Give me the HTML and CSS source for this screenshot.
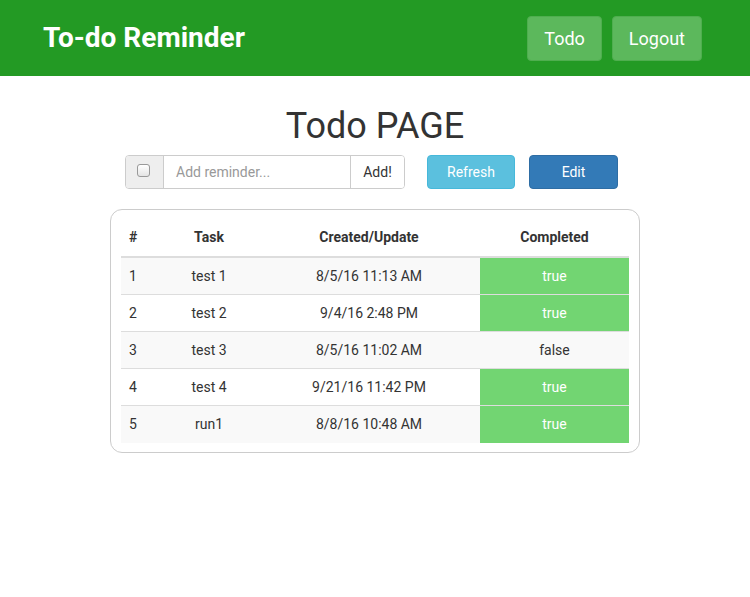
FILE: index.html
```html
<!DOCTYPE html>
<html>
<head>
<meta charset="utf-8">
<link rel="stylesheet" href="styles.css">
</head>
<body>
<header class="navbar">
  <div class="brand">To-do Reminder</div>
  <nav class="nav">
    <a class="nav-btn">Todo</a>
    <a class="nav-btn">Logout</a>
  </nav>
</header>
<main class="main">
  <h1 class="title">Todo PAGE</h1>
  <div class="toolbar">
    <div class="input-group">
      <span class="addon"><span class="checkbox"></span></span>
      <span class="input">Add reminder...</span>
      <span class="add-btn">Add!</span>
    </div>
    <span class="btn btn-info">Refresh</span>
    <span class="btn btn-primary">Edit</span>
  </div>
  <div class="card">
    <table class="table">
      <thead>
        <tr><th class="c1">#</th><th class="c2">Task</th><th class="c3">Created/Update</th><th class="c4">Completed</th></tr>
      </thead>
      <tbody>
        <tr><td class="c1">1</td><td class="c2">test 1</td><td class="c3">8/5/16 11:13 AM</td><td class="c4 done">true</td></tr>
        <tr><td class="c1">2</td><td class="c2">test 2</td><td class="c3">9/4/16 2:48 PM</td><td class="c4 done">true</td></tr>
        <tr><td class="c1">3</td><td class="c2">test 3</td><td class="c3">8/5/16 11:02 AM</td><td class="c4">false</td></tr>
        <tr><td class="c1">4</td><td class="c2">test 4</td><td class="c3">9/21/16 11:42 PM</td><td class="c4 done">true</td></tr>
        <tr><td class="c1">5</td><td class="c2">run1</td><td class="c3">8/8/16 10:48 AM</td><td class="c4 done">true</td></tr>
      </tbody>
    </table>
  </div>
</main>
</body>
</html>
```

FILE: styles.css
```css
* { box-sizing: border-box; }
body {
  margin: 0;
  font-family: Roboto, "Liberation Sans", sans-serif;
  color: #333;
  background: #fff;
}
.navbar {
  height: 76px;
  background: #239a24;
  display: flex;
  align-items: center;
  justify-content: space-between;
  padding: 0 48px 0 43px;
}
.brand {
  color: #fff;
  font-size: 28px;
  font-weight: 700;
  margin-top: -2px;
}
.nav {
  display: flex;
  gap: 10px;
  margin-top: 1px;
}
.nav-btn {
  display: flex;
  align-items: center;
  justify-content: center;
  height: 45px;
  padding: 0 16px;
  background: #5cb85c;
  color: #fff;
  font-size: 18px;
  border-radius: 4px;
  border: 1px solid #4fae4f;
}
.main {
  display: flex;
  flex-direction: column;
  align-items: center;
}
.title {
  margin: 28px 0 0;
  font-size: 36px;
  font-weight: 400;
  line-height: 44px;
  color: #333;
}
.toolbar {
  display: flex;
  align-items: center;
  margin-top: 7px;
  margin-right: 7px;
}
.input-group {
  display: flex;
  height: 34px;
  border: 1px solid #ccc;
  border-radius: 4px;
  font-size: 14px;
  overflow: hidden;
}
.addon {
  width: 38px;
  background: #eee;
  border-right: 1px solid #ccc;
  display: flex;
  align-items: center;
  justify-content: center;
}
.checkbox {
  width: 13px;
  height: 13px;
  border: 1px solid #999;
  border-radius: 3px;
  background: linear-gradient(#fff, #e4e4e4);
  margin-top: -4px;
  margin-left: -3px;
}
.input {
  width: 186px;
  display: flex;
  align-items: center;
  padding-left: 12px;
  color: #999;
  background: #fff;
}
.add-btn {
  width: 54px;
  border-left: 1px solid #ccc;
  display: flex;
  align-items: center;
  justify-content: center;
  color: #333;
  background: #fff;
}
.btn {
  height: 34px;
  display: flex;
  align-items: center;
  justify-content: center;
  color: #fff;
  font-size: 14px;
  border-radius: 4px;
}
.btn-info {
  width: 88px;
  margin-left: 22px;
  background: #5bc0de;
  border: 1px solid #46b8da;
}
.btn-primary {
  width: 89px;
  margin-left: 14px;
  background: #337ab7;
  border: 1px solid #2e6da4;
}
.card {
  margin-top: 20px;
  width: 530px;
  border: 1px solid #ccc;
  border-radius: 12px;
  padding: 10px 10px 9px;
}
.table {
  width: 508px;
  border-collapse: collapse;
  font-size: 14px;
}
.table th {
  font-size: 14px;
  font-weight: 700;
  height: 36px;
  padding: 7px 8px 9px;
  line-height: 20px;
  border-bottom: 2px solid #ddd;
  vertical-align: middle;
}
.table td {
  height: 37px;
  padding: 8px;
  border-top: 1px solid #ddd;
  line-height: 20px;
}
.table tbody tr:first-child td { border-top: none; height: 36px; }
.table tbody tr:nth-child(odd) { background: #f9f9f9; }
.c1 { width: 39px; text-align: left; }
.c2 { width: 98px; text-align: center; }
.c3 { width: 222px; text-align: center; }
.c4 { width: 149px; text-align: center; }
.table td.done { background: #72d572; color: #fff; }
```
